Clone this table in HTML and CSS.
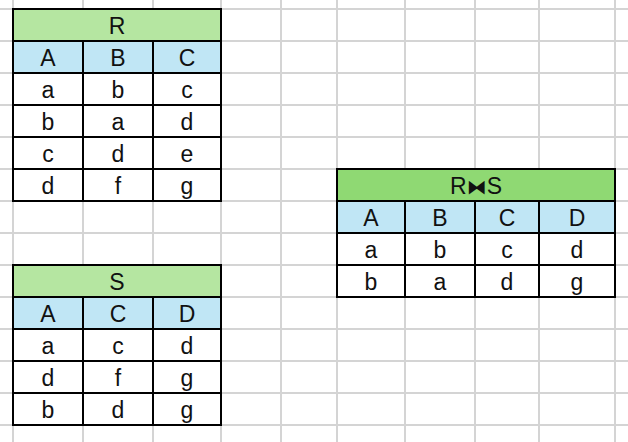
FILE: index.html
```html
<!DOCTYPE html>
<html lang="zh">
<head>
<meta charset="utf-8">
<title>R ⋈ S</title>
<link rel="stylesheet" href="styles.css">
</head>
<body>
<div class="sheet">
  <div class="rel cols-3 pos-r">
    <div class="title">R</div>
    <div class="head">A</div><div class="head">B</div><div class="head">C</div>
    <div class="cell">a</div><div class="cell">b</div><div class="cell">c</div>
    <div class="cell">b</div><div class="cell">a</div><div class="cell">d</div>
    <div class="cell">c</div><div class="cell">d</div><div class="cell">e</div>
    <div class="cell">d</div><div class="cell">f</div><div class="cell">g</div>
  </div>

  <div class="rel cols-4 pos-join">
    <div class="title title-join">R<span class="bowtie">⧓</span>S</div>
    <div class="head">A</div><div class="head">B</div><div class="head">C</div><div class="head">D</div>
    <div class="cell">a</div><div class="cell">b</div><div class="cell">c</div><div class="cell">d</div>
    <div class="cell">b</div><div class="cell">a</div><div class="cell">d</div><div class="cell">g</div>
  </div>

  <div class="rel cols-3 pos-s">
    <div class="title">S</div>
    <div class="head">A</div><div class="head">C</div><div class="head">D</div>
    <div class="cell">a</div><div class="cell">c</div><div class="cell">d</div>
    <div class="cell">d</div><div class="cell">f</div><div class="cell">g</div>
    <div class="cell">b</div><div class="cell">d</div><div class="cell">g</div>
  </div>
</div>
</body>
</html>
```

FILE: styles.css
```css
html, body {
  margin: 0;
  padding: 0;
  background: #ffffff;
}

.sheet {
  width: 628px;
  height: 442px;
  overflow: hidden;
  display: grid;
  grid-template-columns: 12px 70px 70px 68px 60px 56px 68px 70px 64px 76px 1fr;
  grid-template-rows: 8px repeat(13, 32px) 1fr;
  font-family: "Liberation Sans", Arial, sans-serif;
  color: #111;
  background:
    linear-gradient(#d4d4d4, #d4d4d4) 12px 0 / 2px 100% no-repeat,
    linear-gradient(#d4d4d4, #d4d4d4) 82px 0 / 2px 100% no-repeat,
    linear-gradient(#d4d4d4, #d4d4d4) 152px 0 / 2px 100% no-repeat,
    linear-gradient(#d4d4d4, #d4d4d4) 220px 0 / 2px 100% no-repeat,
    linear-gradient(#d4d4d4, #d4d4d4) 280px 0 / 2px 100% no-repeat,
    linear-gradient(#d4d4d4, #d4d4d4) 336px 0 / 2px 100% no-repeat,
    linear-gradient(#d4d4d4, #d4d4d4) 404px 0 / 2px 100% no-repeat,
    linear-gradient(#d4d4d4, #d4d4d4) 474px 0 / 2px 100% no-repeat,
    linear-gradient(#d4d4d4, #d4d4d4) 538px 0 / 2px 100% no-repeat,
    linear-gradient(#d4d4d4, #d4d4d4) 614px 0 / 2px 100% no-repeat,
    repeating-linear-gradient(to bottom, transparent 0 8px, #d4d4d4 8px 10px, transparent 10px 32px),
    #ffffff;
}

.rel {
  display: grid;
  align-self: start;
  justify-self: start;
  border-left: 2px solid #000;
  border-top: 2px solid #000;
  background: #fff;
}

.cols-3 { grid-template-columns: 70px 70px 68px; }
.cols-4 { grid-template-columns: 68px 70px 64px 76px; }

.pos-r { grid-column: 2 / span 3; grid-row: 2 / span 6; }
.pos-s { grid-column: 2 / span 3; grid-row: 10 / span 5; }
.pos-join { grid-column: 7 / span 4; grid-row: 7 / span 4; }

.title,
.head,
.cell {
  box-sizing: border-box;
  height: 32px;
  padding-top: 2px;
  border-right: 2px solid #000;
  border-bottom: 2px solid #000;
  text-align: center;
  font-size: 23px;
  line-height: 28px;
  overflow: hidden;
}

.title {
  grid-column: 1 / -1;
  background: #b5e6a1;
}

.title-join {
  background: #8fd973;
}

.bowtie {
  font-family: "DejaVu Sans", sans-serif;
  font-size: 20px;
  vertical-align: 0;
}

.head {
  background: #c0e6f5;
}

.cell {
  background: #ffffff;
}
```
